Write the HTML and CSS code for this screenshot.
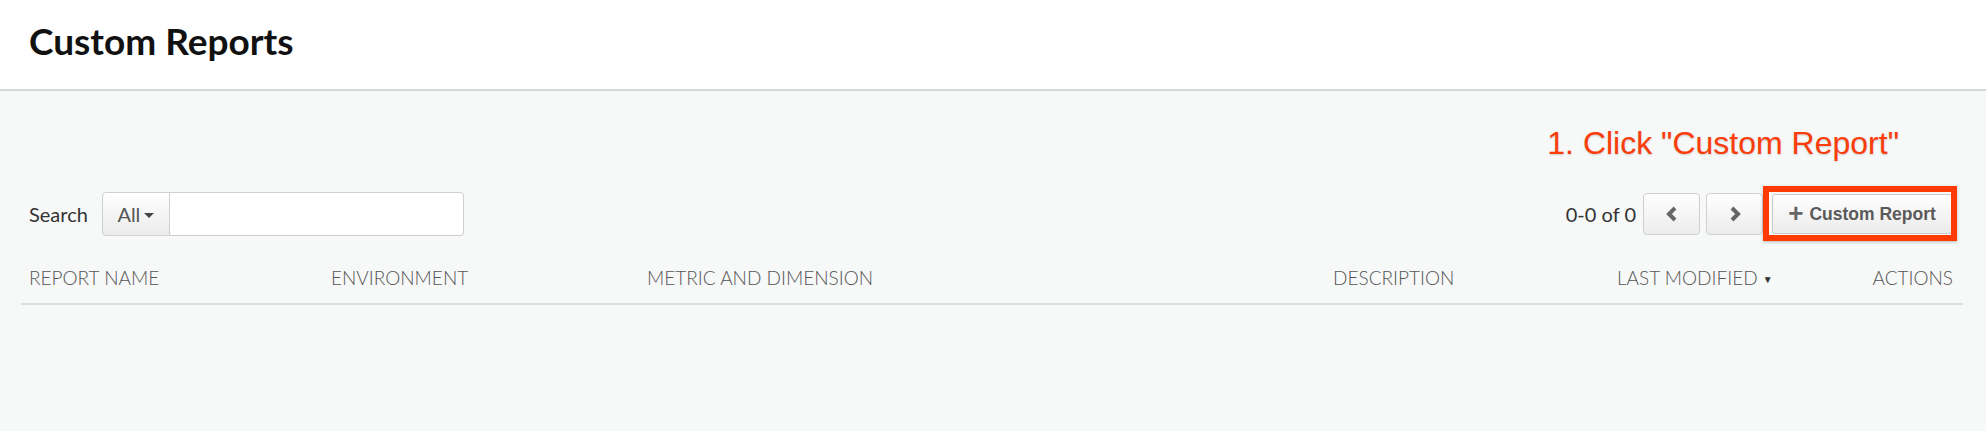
FILE: index.html
```html
<!DOCTYPE html>
<html>
<head>
<meta charset="utf-8">
<link rel="stylesheet" href="styles.css">
</head>
<body>
<header class="page-header">
  <h1 class="page-title">Custom Reports</h1>
</header>
<main class="content">
  <div class="callout-row">
    <span class="callout">1. Click "Custom Report"</span>
  </div>
  <div class="toolbar">
    <div class="search">
      <span class="search-label">Search</span>
      <div class="search-group">
        <button class="scope-btn">All <span class="caret"></span></button>
        <input class="search-input" type="text">
      </div>
    </div>
    <div class="pager">
      <span class="count">0-0 of 0</span>
      <button class="page-btn" aria-label="Previous">
        <svg width="14" height="16" viewBox="0 0 14 16"><path d="M10 2 L4 8 L10 14" fill="none" stroke="#666" stroke-width="4" stroke-linejoin="miter"/></svg>
      </button>
      <button class="page-btn" aria-label="Next">
        <svg width="14" height="16" viewBox="0 0 14 16"><path d="M4 2 L10 8 L4 14" fill="none" stroke="#666" stroke-width="4" stroke-linejoin="miter"/></svg>
      </button>
      <div class="add-wrap">
        <button class="add-btn"><span class="plus">+</span>Custom Report</button>
        <span class="highlight"></span>
      </div>
    </div>
  </div>
  <div class="thead">
    <div class="th">REPORT NAME</div>
    <div class="th">ENVIRONMENT</div>
    <div class="th">METRIC AND DIMENSION</div>
    <div class="th">DESCRIPTION</div>
    <div class="th">LAST MODIFIED <span class="sort">&#9660;</span></div>
    <div class="th th-right">ACTIONS</div>
  </div>
</main>
</body>
</html>
```

FILE: styles.css
```css
html, body {
  margin: 0;
  padding: 0;
}
body {
  background: #f7f8f8;
  font-family: Lato, "Open Sans", sans-serif;
  width: 1986px;
  height: 431px;
  overflow: hidden;
}
.page-header {
  background: #ffffff;
  height: 91px;
  border-bottom: 2px solid #d6d7d7;
  box-sizing: border-box;
  display: flex;
  align-items: center;
  padding: 0 0 8px 29px;
}
.page-title {
  margin: 0;
  font-size: 37px;
  font-weight: 700;
  color: #111;
  letter-spacing: 0;
}
.content {
  padding: 0 23px 0 21px;
}
.callout-row {
  display: flex;
  justify-content: flex-end;
  padding: 32px 64px 0 0;
  height: 52px;
}
.callout {
  font-family: "Liberation Sans", Arial, sans-serif;
  font-size: 32px;
  color: #fb3d0a;
  line-height: 40px;
  text-shadow: 0 1px 2px rgba(0,0,0,0.18);
}
.toolbar {
  display: flex;
  justify-content: space-between;
  align-items: center;
  margin-top: 17px;
  height: 44px;
}
.search {
  display: flex;
  align-items: center;
  padding-left: 8px;
}
.search-label {
  font-size: 20px;
  color: #333;
  margin-right: 14px;
}
.search-group {
  display: flex;
  height: 44px;
}
.scope-btn {
  width: 68px;
  height: 44px;
  border: 1px solid #cfd0d0;
  border-radius: 4px 0 0 4px;
  background: linear-gradient(#ffffff, #ebebeb);
  font-family: Lato, sans-serif;
  font-size: 20px;
  color: #555;
  display: flex;
  align-items: center;
  justify-content: center;
  gap: 4px;
  padding: 0;
}
.caret {
  width: 0;
  height: 0;
  border-left: 5px solid transparent;
  border-right: 5px solid transparent;
  border-top: 5px solid #444;
  margin-top: 2px;
}
.search-input {
  width: 294px;
  height: 44px;
  box-sizing: border-box;
  border: 1px solid #cfd0d0;
  border-left: none;
  border-radius: 0 4px 4px 0;
  background: #fff;
  margin: 0;
  outline: none;
}
.pager {
  display: flex;
  align-items: center;
  padding-right: 11px;
}
.count {
  font-size: 20px;
  color: #333;
  margin-right: 7px;
}
.page-btn {
  width: 57px;
  height: 42px;
  border: 1px solid #cfd0d0;
  border-radius: 4px;
  background: linear-gradient(#ffffff, #ececec);
  display: flex;
  align-items: center;
  justify-content: center;
  padding: 0;
  margin-right: 6px;
}
.page-btn + .page-btn {
  margin-right: 9px;
}
.add-wrap {
  position: relative;
  display: flex;
}
.add-btn {
  width: 180px;
  height: 40px;
  border: 1px solid #c8c9c9;
  border-radius: 3px;
  background: linear-gradient(#ffffff, #ebebeb);
  font-family: "Liberation Sans", Arial, sans-serif;
  font-weight: 700;
  font-size: 17.5px;
  color: #5a5a5a;
  display: flex;
  align-items: center;
  justify-content: center;
  padding: 0;
  gap: 6px;
}
.plus {
  font-weight: 700;
  font-size: 26px;
  line-height: 20px;
  color: #666;
  margin-top: -2px;
}
.highlight {
  position: absolute;
  left: -9px;
  right: -5px;
  top: -8px;
  bottom: -7px;
  border: 6px solid #ff3a00;
  box-shadow: 0 1px 3px rgba(0,0,0,0.25);
  pointer-events: none;
}
.thead {
  display: grid;
  grid-template-columns: 302px 316px 686px 284px 1fr auto;
  margin-top: 22px;
  height: 38px;
  padding-bottom: 7px;
  align-items: center;
  border-bottom: 2px solid #dcdddd;
}
.th {
  font-size: 19px;
  font-weight: 300;
  color: #555;
  padding: 0 10px 0 8px;
  white-space: nowrap;
}
.th-right {
  text-align: right;
}
.sort {
  font-size: 10px;
  color: #333;
  vertical-align: 2px;
}
```
